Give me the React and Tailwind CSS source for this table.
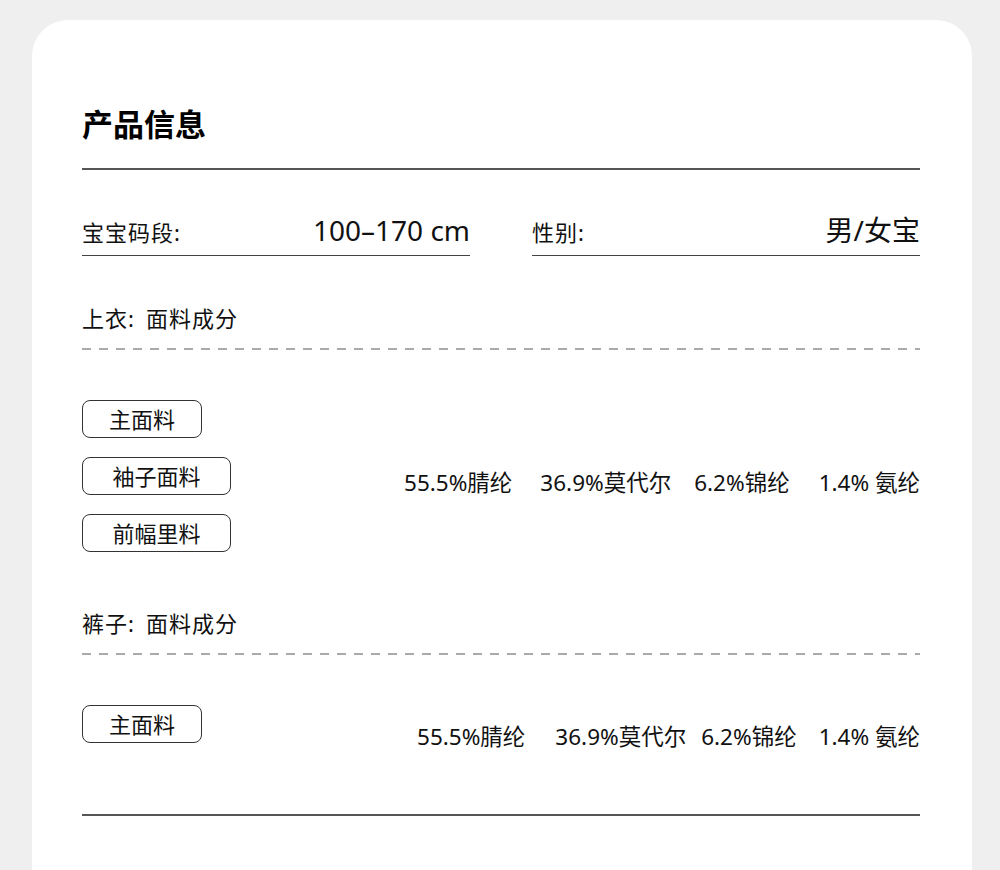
import React from "react";

const FONT = { fontFamily: '"Noto Sans", "Noto Sans CJK SC", sans-serif' };

const dashed =
  "h-[2px] bg-[repeating-linear-gradient(to_right,#aaaaaa_0px,#aaaaaa_9px,transparent_9px,transparent_17px)]";

const Pill = ({ label, w }) => (
  <div
    className={`${w} h-[38px] flex items-center justify-center border border-[#333] rounded-[8px] text-[22px] text-[#111] leading-none`}
  >
    {label}
  </div>
);

const Composition = ({ items, gaps }) => (
  <div className="flex items-center text-[22.5px] text-[#111] leading-none whitespace-nowrap">
    {items.map((it, i) => (
      <span key={it} className={i > 0 ? gaps[i - 1] : ""}>
        {it}
      </span>
    ))}
  </div>
);

const Field = ({ label, value }) => (
  <div className="w-[388px] h-[86px] flex flex-col justify-end border-b border-[#444]">
    <div className="flex items-baseline justify-between pb-[11px]">
      <span className="text-[22px] text-[#111] leading-none tracking-[1px]">{label}</span>
      <span className="text-[28px] text-[#111] leading-none">{value}</span>
    </div>
  </div>
);

const SectionLabel = ({ part }) => (
  <div className="flex text-[22px] leading-[24px] text-[#111] tracking-[1px]">
    <span>{part}:</span>
    <span className="ml-[11px]">面料成分</span>
  </div>
);

const items = ["55.5%腈纶", "36.9%莫代尔", "6.2%锦纶", "1.4% 氨纶"];

export default function App() {
  return (
    <div className="min-h-[870px] bg-[#efefef] pt-[20px] pl-[32px] pr-[28px] overflow-hidden" style={FONT}>
      <div className="bg-white rounded-t-[36px] h-[850px] pl-[50px] pr-[52px] pt-[86px]">
        <h1 className="text-[31px] leading-[36px] font-bold text-black">产品信息</h1>
        <div className="mt-[26px] h-[2px] bg-[#555]" />

        <div className="flex justify-between">
          <Field label="宝宝码段:" value="100–170 cm" />
          <Field label="性别:" value="男/女宝" />
        </div>

        <div className="mt-[50px]">
          <SectionLabel part="上衣" />
        </div>
        <div className={`mt-[18px] ${dashed}`} />

        <div className="mt-[50px] flex items-center justify-between">
          <div className="flex flex-col gap-[19px]">
            <Pill label="主面料" w="w-[120px]" />
            <Pill label="袖子面料" w="w-[149px]" />
            <Pill label="前幅里料" w="w-[149px]" />
          </div>
          <div className="pt-[15px]">
            <Composition items={items} gaps={["ml-[28px]", "ml-[23px]", "ml-[29px]"]} />
          </div>
        </div>

        <div className="mt-[59px]">
          <SectionLabel part="裤子" />
        </div>
        <div className={`mt-[18px] ${dashed}`} />

        <div className="mt-[50px] flex items-start justify-between">
          <Pill label="主面料" w="w-[120px]" />
          <div className="pt-[21px]">
            <Composition items={items} gaps={["ml-[30px]", "ml-[15px]", "ml-[22px]"]} />
          </div>
        </div>

        <div className="mt-[65px] h-[2px] bg-[#555]" />
      </div>
    </div>
  );
}
